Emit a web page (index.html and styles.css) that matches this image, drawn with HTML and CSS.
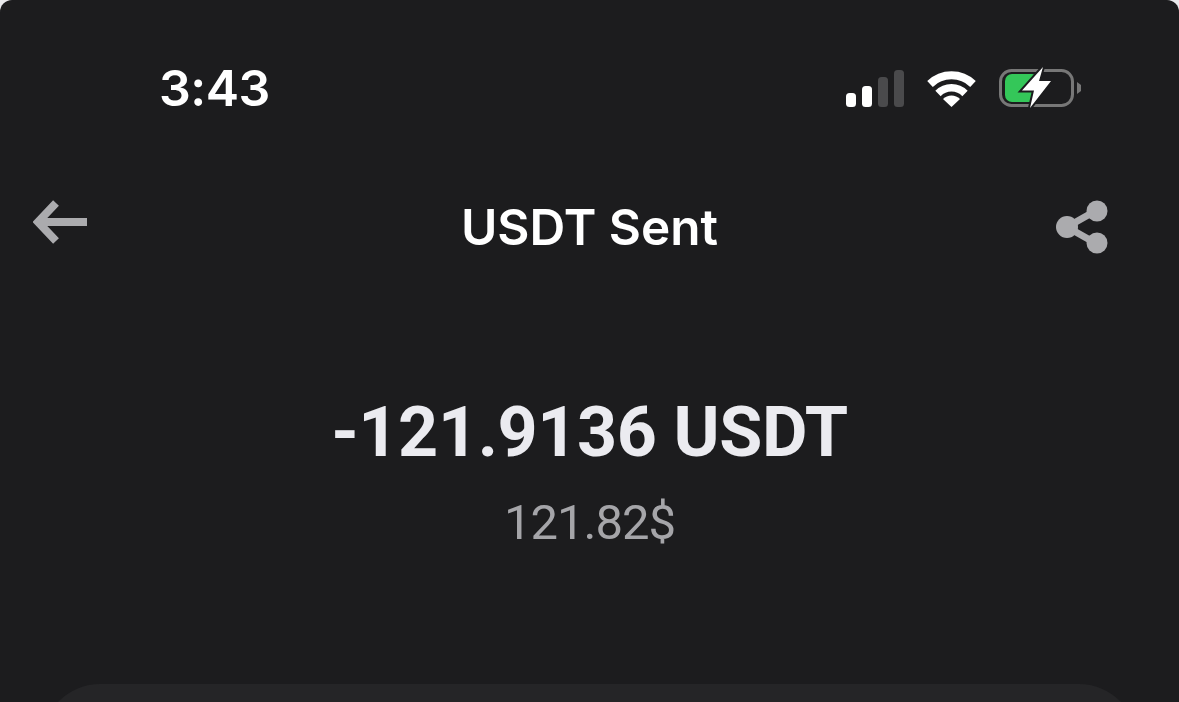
FILE: index.html
```html
<!DOCTYPE html>
<html lang="en">
<head>
    <meta charset="UTF-8">
    <meta name="viewport" content="width=device-width, initial-scale=1.0">
    <title>USDT Sent</title>
    <link rel="stylesheet" href="styles.css">
</head>
<body>
    <div class="screen">
        <div class="status-bar">
            <span class="time">3:43</span>
            <div class="status-icons">
                <svg class="signal" width="58" height="37" viewBox="0 0 58 37">
                    <rect x="0" y="23" width="10" height="14" rx="3.5" fill="#fff"/>
                    <rect x="16" y="16" width="10" height="21" rx="3.5" fill="#fff"/>
                    <rect x="32" y="7" width="10" height="30" rx="3.5" fill="#4a4a4c"/>
                    <rect x="48" y="0" width="10" height="37" rx="3.5" fill="#4a4a4c"/>
                </svg>
                <svg class="wifi" width="49" height="37" viewBox="0 0 49 37">
                    <path d="M3 14 A31 31 0 0 1 46 14" fill="none" stroke="#fff" stroke-width="8"/>
                    <path d="M11 23.5 A19 19 0 0 1 38 23.5" fill="none" stroke="#fff" stroke-width="7.5"/>
                    <path d="M16 29 A12 12 0 0 1 33 29 L24.5 37 Z" fill="#fff"/>
                </svg>
                <svg class="battery" width="82" height="42" viewBox="0 0 82 42">
                    <rect x="1.5" y="3.5" width="72" height="35" rx="11" fill="none" stroke="#777" stroke-width="3"/>
                    <rect x="6" y="7" width="34" height="28" rx="7" fill="#34c759"/>
                    <path d="M78 15 L82 18 V24 L78 27 Z" fill="#777"/>
                    <path d="M44 0 L23 23.5 H35 L31 41 L52 14 H40 Z" fill="#fff" stroke="#1c1c1e" stroke-width="4" paint-order="stroke"/>
                </svg>
            </div>
        </div>

        <div class="nav-bar">
            <svg class="back" width="56" height="44" viewBox="0 0 56 44">
                <path d="M23 3 L5 22 L23 41" fill="none" stroke="#ababae" stroke-width="8"/>
                <path d="M6 22 H54" fill="none" stroke="#ababae" stroke-width="8"/>
            </svg>
            <h1 class="title">USDT Sent</h1>
            <svg class="share" width="52" height="54" viewBox="0 0 52 54">
                <path d="M11 27 L41 10 M11 27 L41 44" stroke="#ababae" stroke-width="7" fill="none"/>
                <circle cx="11" cy="27" r="11" fill="#ababae"/>
                <circle cx="41" cy="11" r="10.5" fill="#ababae"/>
                <circle cx="41" cy="43" r="10.5" fill="#ababae"/>
            </svg>
        </div>

        <div class="amount-block">
            <div class="amount">-121.9136 USDT</div>
            <div class="fiat">121.82$</div>
        </div>

        <div class="details-card"></div>
    </div>
</body>
</html>
```

FILE: styles.css
```css
* {
    box-sizing: border-box;
}

html, body {
    margin: 0;
    height: 100%;
    background-color: #e9e9ec;
    overflow: hidden;
}

.screen {
    display: flex;
    flex-direction: column;
    height: 702px;
    background-color: #1c1c1e;
    border-radius: 12px 12px 0 0;
    font-family: Roboto, "Liberation Sans", sans-serif;
    overflow: hidden;
}

.status-bar {
    display: flex;
    justify-content: space-between;
    align-items: center;
    height: 42px;
    margin-top: 67px;
    padding: 0 98px 0 159px;
}

.time {
    color: #fff;
    font-family: Inter, sans-serif;
    font-size: 50px;
    font-weight: 600;
    letter-spacing: -0.5px;
}

.status-icons {
    display: flex;
    align-items: center;
    gap: 23px;
}

.nav-bar {
    display: grid;
    grid-template-columns: 1fr auto 1fr;
    align-items: center;
    height: 60px;
    margin-top: 88px;
}

.back {
    margin: 0 0 10px 33px;
}

.title {
    margin: 0;
    color: #fff;
    font-family: Inter, sans-serif;
    font-size: 49.5px;
    font-weight: 600;
}

.share {
    justify-self: end;
    margin-right: 71px;
}

.amount-block {
    margin-top: 135px;
    text-align: center;
}

.amount {
    color: #ebebf0;
    font-size: 70px;
    font-weight: 700;
    line-height: 80px;
    letter-spacing: -0.4px;
}

.fiat {
    margin-top: 24px;
    color: #a5a5a9;
    font-size: 49px;
    font-weight: 400;
    line-height: 54px;
    letter-spacing: -1px;
}

.details-card {
    flex: none;
    height: 120px;
    margin: 134px 42px 0;
    background-color: #252527;
    border-radius: 58px 58px 0 0;
}
```
